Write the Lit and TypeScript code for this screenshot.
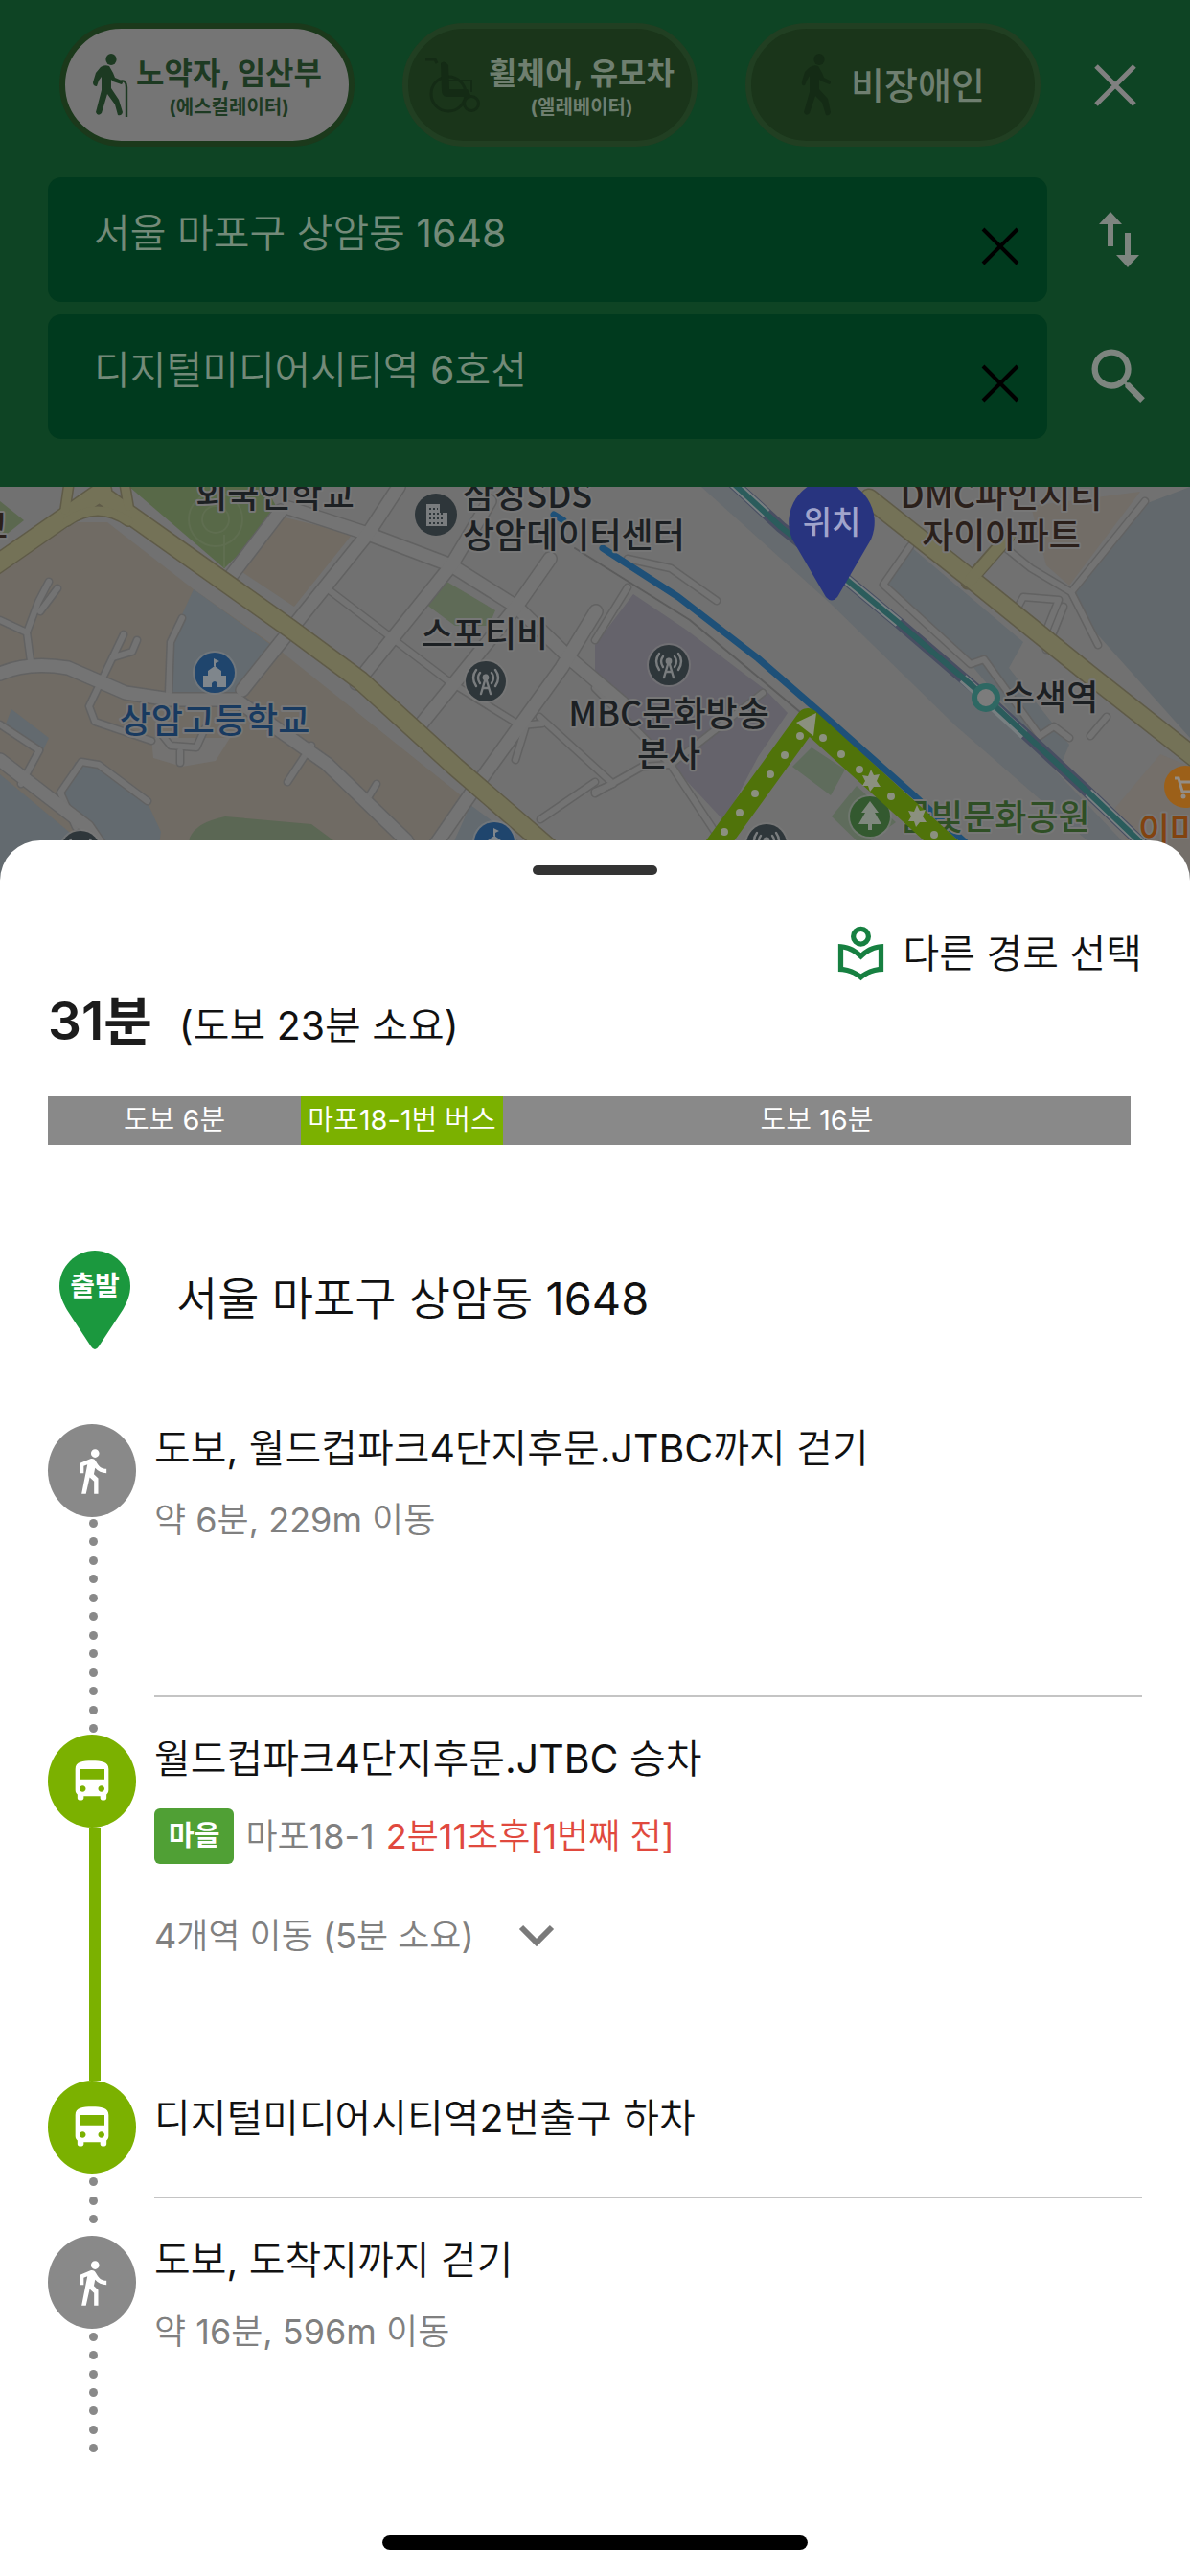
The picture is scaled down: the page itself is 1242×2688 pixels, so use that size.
import { LitElement, html, svg, css } from "lit";
import { customElement, state } from "lit/decorators.js";

type StepKind = "walk" | "bus";

interface Step {
  kind: StepKind;
  title: string;
  detail?: string;
  bus?: { badge: string; line: string; arrival: string; stops: string };
  link: "dots" | "line";
  dots: number;
  size: string;
  divider: boolean;
}

const STEPS: Step[] = [
  {
    kind: "walk",
    title: "도보, 월드컵파크4단지후문.JTBC까지 걷기",
    detail: "약 6분, 229m 이동",
    link: "dots",
    dots: 12,
    size: "tall",
    divider: true,
  },
  {
    kind: "bus",
    title: "월드컵파크4단지후문.JTBC 승차",
    bus: {
      badge: "마을",
      line: "마포18-1",
      arrival: "2분11초후[1번째 전]",
      stops: "4개역 이동 (5분 소요)",
    },
    link: "line",
    dots: 0,
    size: "ride",
    divider: false,
  },
  {
    kind: "bus",
    title: "디지털미디어시티역2번출구 하차",
    link: "dots",
    dots: 3,
    size: "short",
    divider: true,
  },
  {
    kind: "walk",
    title: "도보, 도착지까지 걷기",
    detail: "약 16분, 596m 이동",
    link: "dots",
    dots: 7,
    size: "last",
    divider: false,
  },
];

const SEGMENTS = [
  { label: "도보 6분", weight: 264, kind: "walk" },
  { label: "마포18-1번 버스", weight: 211, kind: "bus" },
  { label: "도보 16분", weight: 655, kind: "walk" },
];

const FONT = css`Inter, "Noto Sans CJK KR", "Noto Sans", sans-serif`;
/* Regular Latin figures next to light Hangul */
const MIXED = css`Inter, "Noto Sans CJK KR DemiLight", "Noto Sans CJK KR Light", "Noto Sans CJK KR", sans-serif`;

const walkIcon = html`<svg class="glyph" viewBox="0 0 24 24" aria-hidden="true">
  <path d="M13.5 5.5c1.1 0 2-.9 2-2s-.9-2-2-2-2 .9-2 2 .9 2 2 2zM9.8 8.9L7 23h2.1l1.8-8 2.1 2v6h2v-7.5l-2.1-2 .6-3C14.8 12 16.8 13 19 13v-2c-1.9 0-3.5-1-4.3-2.4l-1-1.6c-.4-.6-1-1-1.7-1-.3 0-.5.1-.8.1L6 8.3V13h2V9.6l1.8-.7z" />
</svg>`;

const busIcon = html`<svg class="glyph" viewBox="0 0 24 24" aria-hidden="true">
  <path d="M4 16c0 .88.39 1.67 1 2.22V20c0 .55.45 1 1 1h1c.55 0 1-.45 1-1v-1h8v1c0 .55.45 1 1 1h1c.55 0 1-.45 1-1v-1.78c.61-.55 1-1.34 1-2.22V6c0-3.5-3.58-4-8-4s-8 .5-8 4v10zm3.5 1c-.83 0-1.5-.67-1.5-1.5S6.67 14 7.5 14s1.5.67 1.5 1.5S8.33 17 7.5 17zm9 0c-.83 0-1.5-.67-1.5-1.5s.67-1.5 1.5-1.5 1.5.67 1.5 1.5-.67 1.5-1.5 1.5zm1.5-6H6V6h12v5z" />
</svg>`;

const elderIcon = html`<svg class="person" width="38" height="66" viewBox="0 0 38 66" aria-hidden="true">
  <ellipse cx="20" cy="6" rx="5.6" ry="6" />
  <path d="M9 14 Q13 11 18 13 L22 20 L24 25 L31 28 Q33 30 31 32 L22 29 L20 27 L20 36 L28 48 L32 61 Q31 65 27 64 L24 53 L16 42 L10 62 Q6 66 4 61 L10 38 L10 24 L7 28 L5 34 Q1 34 1 30 L4 20 Z" />
  <path d="M29 31 Q30 27 34 29 Q36 31 36 35 V66" fill="none" stroke="currentColor" stroke-width="2.4" />
</svg>`;

const wheelchairIcon = html`<svg class="person" width="58" height="58" viewBox="0 0 58 58" aria-hidden="true">
  <g fill="none" stroke="currentColor" stroke-width="3">
    <circle cx="24" cy="38" r="18" />
    <circle cx="48" cy="48" r="7.5" />
    <path d="M0 2 H10 L12 6" />
    <path d="M24 24 H48 V36" stroke-width="2" />
  </g>
  <path d="M16 6 Q20 2 24 8 L25 33 H44 L48 41 H22 Q17 40 17 34 Z" />
</svg>`;

const walkerIcon = html`<svg class="person" width="32" height="66" viewBox="0 0 32 66" aria-hidden="true">
  <ellipse cx="19" cy="6" rx="5.6" ry="6" />
  <path d="M8 15 Q13 11 18 13 L22 20 L24 25 L30 28 Q32 30 30 32 L22 29 L19 27 L19 37 L28 47 L31 61 Q30 65 26 64 L22 51 L15 44 L9 62 Q5 66 3 61 L9 40 L9 23 L6 28 L4 33 Q0 34 1 29 L4 19 Z" />
</svg>`;

const antenna = (x: number, y: number) => svg`
  <g transform="translate(${x} ${y})">
    <circle r="23" fill="#7a7a7a" opacity=".6" />
    <circle r="21" fill="#2e363a" />
    <g fill="none" stroke="#797c7e" stroke-width="2.4" stroke-linecap="round">
      <path d="M-6 -9 Q-10 -4 -6 2 M-10 -12 Q-16 -4 -10 5 M6 -9 Q10 -4 6 2 M10 -12 Q16 -4 10 5" />
      <path d="M-5 13 L0 -4 L5 13 M-3 7 H3" />
    </g>
    <circle cy="-4" r="3.4" fill="#797c7e" />
  </g>`;

const school = (x: number, y: number) => svg`
  <g transform="translate(${x} ${y})">
    <circle r="23" fill="#7a7f84" opacity=".6" />
    <circle r="21" fill="#1f456d" />
    <path d="M-12 15 V3 H-7 V-2 L0 -7 L7 -2 V3 H12 V15 H3 V11 Q0 7 -3 11 V15 Z M-1 -7 V-15 L5 -12 L1 -10 V-6 Z" fill="#7f868c" />
  </g>`;

const ROADS = [
  "M301 22 L384 49 L471 82 L539 125 L598 182 L650 226",
  "M416 0 L384 49 L301 152 L253 212",
  "M511 15 L471 82 L372 205",
  "M574 75 L539 125 L436 252",
  "M622 130 L586 189 L495 315 L450 380",
  "M293 25 L238 97",
  "M0 195 Q30 182 71 189 L131 215 L178 222 L246 222 L341 289 L424 369 L440 400",
  "M0 285 L91 355 L115 390",
];

const LANES = [
  "M345 109 L467 202 L543 249",
  "M51 99 L40 120 L28 152 L32 182",
  "M60 106 L42 130",
  "M0 139 L28 152",
  "M129 154 L93 229 L99 245 L158 265",
  "M118 178 L138 172 L143 160",
  "M190 137 L178 162 L176 215",
  "M0 248 L41 275 L22 310",
  "M79 355 L63 319 L85 287 L103 290 L154 328",
  "M170 260 L178 270 L205 272 L214 252",
  "M188 276 V288",
  "M325 270 L300 308",
  "M393 310 L382 328",
  "M564 347 L621 308",
  "M549 249 L538 285",
  "M543 249 L566 247",
  "M563 240 L640 310 L621 318",
  "M621 210 L700 290 L756 375",
  "M621 320 L670 292 L700 290",
  "M700 290 L796 215",
  "M621 160 L655 105",
  "M655 75 L700 85 L748 119",
  "M950 62 L922 102 L1013 185 L1027 180 L1085 260 L1100 250 L1116 262",
  "M1045 60 L1076 85 L1118 110 L1195 15",
  "M1118 110 L1146 165",
  "M1060 130 L1068 115 L1105 118 L1090 155",
  "M1110 125 L1092 170",
  "M1155 240 L1138 260",
];

@customElement("route-map")
export class RouteMap extends LitElement {
  static styles = css`
    :host {
      display: block;
      height: 412px;
      background: #717171;
    }
    .map {
      display: block;
      width: 100%;
      height: 100%;
    }
    .label {
      font: 500 36px "Noto Sans CJK KR", sans-serif;
      paint-order: stroke;
      stroke: #777;
      stroke-width: 4px;
      stroke-linejoin: round;
      fill: #1c2023;
    }
    .mid {
      text-anchor: middle;
    }
    .blue {
      fill: #183a60;
    }
    .brown {
      fill: #2b201b;
    }
    .park {
      fill: #2f4f25;
    }
    .shop {
      fill: #82430f;
    }
    .pin-text {
      font: 500 33px "Noto Sans CJK KR", sans-serif;
      fill: #a0a4cc;
      text-anchor: middle;
    }
  `;

  render() {
    return html`<svg class="map" viewBox="0 0 1242 412" preserveAspectRatio="xMidYMin slice" role="img" aria-label="지도">
      <rect width="1242" height="412" fill="#717171" />
      <path d="M0 85 L80 37 L112 37 L202 107 L285 165 L481 322 L430 412 H0 Z" fill="#706b64" />
      <path d="M0 15 L25 35 L0 55 Z" fill="#5b684f" />
      <path d="M202 107 L283 165 L253 212 L230 222 L174 219 L180 155 Z" fill="#646b70" />
      <path d="M135 0 L234 85 L293 29 L277 0 Z" fill="#586948" />
      <g fill="none" stroke="#5f6e50" stroke-width="2">
        <circle cx="225" cy="34" r="14" />
        <circle cx="225" cy="34" r="28" />
        <path d="M234 85 V50" />
      </g>
      <path d="M297 32 L368 49 L307 125 L253 89 Z" fill="#716b63" />
      <path d="M463 97 L517 129 L510 145 L475 145 L444 122 Z" fill="#5f6b57" />
      <path d="M12 232 L51 262 L45 275 L5 250 Z M79 287 L100 290 L154 330 L168 360 L160 412 H100 L63 319 Z M0 300 L90 375 L90 412 H0 Z M491 332 L545 372 V412 H455 Z" fill="#636a6f" />
      <path d="M158 262 L240 262 L225 286 L190 292 L160 283 Z" fill="#737271" />
      <path d="M198 366 Q205 350 235 344 L325 352 L352 372 V412 H190 Z" fill="#5b6754" />

      <path d="M661 112 L716 149 L799 212 L822 236 L791 282 L756 349 L700 289 L621 200 V165 Z" fill="#65636b" />
      <path d="M732 0 L772 0 L938 142 L1029 220 L1200 400 L1170 400 L997 249 L867 122 Z" fill="#666b6f" />
      <path d="M950 62 L1068 162 L1053 189 L1116 269 L1105 295 L1013 185 L922 102 Z" fill="#646a6e" />
      <path d="M1195 18 L1242 0 V262 L1132 139 L1118 109 Z" fill="#62686c" />
      <path d="M1076 20 L1190 5 L1116 103 L1092 82 Z" fill="#726d67" />
      <path d="M1211 279 L1242 292 V400 H1185 L1164 335 Z" fill="#746f6a" />
      <path d="M847 272 L882 295 L867 322 L827 292 Z M894 312 L935 350 L900 375 L868 344 Z" fill="#5f6c5c" />

      <g fill="none" stroke-linejoin="round" stroke-linecap="round">
        ${LANES.map((d) => svg`<path d=${d} stroke="#626262" stroke-width="9" />`)}
        ${ROADS.map((d) => svg`<path d=${d} stroke="#626262" stroke-width="16" />`)}
        ${LANES.map((d) => svg`<path d=${d} stroke="#737373" stroke-width="6" />`)}
        ${ROADS.map((d) => svg`<path d=${d} stroke="#747474" stroke-width="13" />`)}

        <g stroke="#5f5b48" stroke-width="21">
          <path d="M-5 82 L107 4 M107 9 L303 148 L376 202 L475 292 L600 400" />
          <path d="M907 12 L1017 99 L1136 195 L1250 285" />
        </g>
        <path d="M72 -4 L68 24 M130 -4 L134 20 M70 36 Q102 14 134 36" stroke="#5f5b48" stroke-width="12" />
        <path d="M1010 100 L1052 52" stroke="#5f5b48" stroke-width="15" />
        <g stroke="#747257" stroke-width="18">
          <path d="M-5 82 L107 4 M107 9 L303 148 L376 202 L475 292 L600 400" />
          <path d="M907 12 L1017 99 L1136 195 L1250 285" />
        </g>
        <path d="M72 -4 L68 24 M130 -4 L134 20 M70 36 Q102 14 134 36" stroke="#747257" stroke-width="9" />
        <path d="M1013 97 L1054 50" stroke="#747257" stroke-width="12" />

        <path d="M600 64 L720 139 L835 235" stroke="#5c5c5c" stroke-width="2" />
        <path d="M578 29 L588 35 M629 64 L708 115 L791 179 L867 245 L954 322 L1015 378" stroke="#1e5078" stroke-width="7" />
        <path d="M764 -5 L815 42 L874 89 L938 142 L1029 220 L1136 319 L1205 385" stroke="#484e62" stroke-width="12" />
        <path d="M764 -5 L800 28 M880 94 L938 142 M1005 200 L1069 259 M1136 319 L1205 385" stroke="#787f81" stroke-width="10" stroke-linecap="butt" />
        <path d="M764 -5 L815 42 L874 89 L938 142 L1029 220 L1136 319 L1205 385" stroke="#2b5c5c" stroke-width="6" />
      </g>
      <circle cx="1029" cy="220" r="12" fill="#7c7c7c" stroke="#2e6863" stroke-width="6" />

      <text class="label mid" x="287" y="22">외국인학교</text>
      <text class="label" x="483" y="22">삼성SDS</text>
      <text class="label" x="483" y="64">상암데이터센터</text>
      <text class="label mid" x="506" y="167">스포티비</text>
      <text class="label mid blue" x="224" y="257">상암고등학교</text>
      <text class="label brown" x="-25" y="54">교</text>
      <text class="label mid" x="698" y="250">MBC문화방송</text>
      <text class="label mid" x="698" y="292">본사</text>
      <text class="label mid brown" x="1045" y="22">DMC파인시티</text>
      <text class="label mid brown" x="1045" y="64">자이아파트</text>
      <text class="label" x="1047" y="233">수색역</text>
      <text class="label park" x="939" y="358">물빛문화공원</text>
      <text class="label shop" x="1188" y="371">이마트</text>

      <circle cx="455" cy="29" r="22" fill="#2e363a" />
      <path d="M445 18 H459 V27 H467 V41 H445 Z" fill="#797c7e" />
      <path d="M448 23 H457 M448 28 H464 M448 33 H464 M448 38 H464" stroke="#2e363a" stroke-width="2" stroke-dasharray="2 2" />
      ${antenna(507, 203)} ${antenna(698, 186)} ${antenna(800, 373)} ${antenna(84, 380)}
      ${school(224, 194)} ${school(516, 371)}

      <circle cx="908" cy="344" r="23" fill="#7a7f7a" opacity=".6" />
      <circle cx="908" cy="344" r="21" fill="#33592f" />
      <path d="M908 328 L917 340 H913 L920 352 H910 V358 H906 V352 H896 L903 340 H899 Z" fill="#7f887e" />
      <circle cx="1237" cy="313" r="22" fill="#9c6019" />
      <path d="M1226 304 H1230 L1234 318 H1246 M1231 308 H1246" fill="none" stroke="#938d86" stroke-width="3" />
      <circle cx="1235" cy="323" r="2.5" fill="#938d86" />

      <path d="M738 388 L843 243 L1003 388" fill="none" stroke="#50730a" stroke-width="24" stroke-linejoin="round" />
      <g fill="#8b907f">
        ${[
          [835, 260], [819, 280], [804, 300], [788, 320], [772, 340], [756, 360],
          [859, 262], [878, 279], [897, 295], [930, 323], [975, 363],
        ].map(([x, y]) => svg`<circle cx=${x} cy=${y} r="4" />`)}
        <path d="M831 246 L852 236 L849 260 Z" />
        ${[
          [909, 307],
          [957, 344],
        ].map(
          ([x, y]) => svg`<path transform="translate(${x} ${y})"
            d="M0 -12 L3 -6 L9 -7 L6 0 L10 6 L3 6 L-1 11 L-3 5 L-9 5 L-6 0 L-9 -6 L-3 -5 Z" />`,
        )}
      </g>

      <path d="M868 -8 A45 45 0 0 0 827 55 L862 115 Q868 122 874 115 L909 55 A45 45 0 0 0 868 -8 Z" fill="#28347f" />
      <text class="pin-text" x="868" y="49">위치</text>
    </svg>`;
  }
}

@customElement("route-step")
export class RouteStep extends LitElement {
  static properties = { step: { attribute: false }, open: { state: true } };
  declare step: Step;
  declare open: boolean;

  constructor() {
    super();
    this.open = false;
  }

  static styles = css`
    :host {
      display: block;
      font-family: ${FONT};
    }
    .step {
      display: grid;
      grid-template-columns: 92px 1fr;
      column-gap: 19px;
    }
    .tall {
      min-height: 324px;
    }
    .ride {
      min-height: 361px;
    }
    .short {
      min-height: 162px;
    }
    .last {
      min-height: 228px;
    }
    .rail {
      display: flex;
      flex-direction: column;
    }
    .marker {
      display: grid;
      place-items: center;
      height: 97px;
      border-radius: 50%;
      background: #898989;
    }
    .marker.bus {
      background: #7bb100;
    }
    .glyph {
      width: 52px;
      height: 52px;
      fill: #fff;
    }
    .link {
      flex: 1;
      margin-left: 43px;
    }
    .line {
      width: 12px;
      background: #7bb100;
    }
    .dots {
      display: flex;
      flex-direction: column;
      justify-content: space-between;
      padding: 2px 0;
    }
    .short .dots {
      padding: 4px 0 13px;
    }
    .last .dots {
      padding: 4px 0 2px;
    }
    .dot {
      width: 9px;
      height: 9px;
      border-radius: 50%;
      background: #898989;
    }
    .body {
      display: flex;
      flex-direction: column;
    }
    .body.divider {
      border-bottom: 2px solid #c4c4c4;
      margin-bottom: 39px;
    }
    .title {
      margin: 0;
      font-size: 41px;
      font-weight: 400;
      font-family: ${MIXED};
      line-height: 50px;
      color: #111;
    }
    .short .title {
      padding-top: 14px;
    }
    .detail {
      margin: 28px 0 0;
      font: 400 36px/44px ${MIXED};
      color: #808080;
    }
    .arrival {
      display: flex;
      align-items: center;
      gap: 12px;
      margin-top: 27px;
      height: 58px;
      font: 400 36px/44px ${MIXED};
      color: #808080;
    }
    .badge {
      padding: 7px 15px;
      border-radius: 6px;
      background: #50a035;
      color: #fff;
      font-size: 29px;
      font-weight: 700;
      font-family: ${FONT};
    }
    .soon {
      color: #e0493e;
    }
    .stops {
      display: flex;
      align-items: center;
      align-self: flex-start;
      gap: 46px;
      margin-top: 53px;
      padding: 0;
      border: 0;
      background: none;
      font: 400 36px/44px ${MIXED};
      color: #808080;
    }
  `;

  private renderBus(bus: NonNullable<Step["bus"]>) {
    return html`
      <div class="arrival">
        <span class="badge">${bus.badge}</span>
        <span>${bus.line}</span>
        <span class="soon">${bus.arrival}</span>
      </div>
      <button class="stops" aria-expanded=${this.open} @click=${() => (this.open = !this.open)}>
        ${bus.stops}
        <svg width="38" height="26" viewBox="0 0 38 26" aria-hidden="true">
          <path d="M3 4 L19 20 L35 4" fill="none" stroke="#7a7a7a" stroke-width="6" />
        </svg>
      </button>
    `;
  }

  render() {
    const s = this.step;
    return html`<div class="step ${s.size}">
      <div class="rail">
        <div class="marker ${s.kind}">${s.kind === "bus" ? busIcon : walkIcon}</div>
        <div class="link ${s.link}">
          ${Array.from({ length: s.dots }, () => html`<span class="dot"></span>`)}
        </div>
      </div>
      <div class="body ${s.divider ? "divider" : ""}">
        <h2 class="title">${s.title}</h2>
        ${s.detail ? html`<p class="detail">${s.detail}</p>` : null}
        ${s.bus ? this.renderBus(s.bus) : null}
      </div>
    </div>`;
  }
}

@customElement("app-root")
export class AppRoot extends LitElement {
  @state() private from = "서울 마포구 상암동 1648";
  @state() private to = "디지털미디어시티역 6호선";
  @state() private mode = 0;

  static styles = css`
    :host {
      display: flex;
      flex-direction: column;
      min-height: 100vh;
      background: #fff;
      font-family: ${FONT};
      color: #111;
    }
    button {
      padding: 0;
      border: 0;
      background: none;
      font-family: inherit;
    }
    .header {
      padding: 24px 0 50px;
      background: #0e4424;
    }
    .modes {
      display: flex;
      padding-left: 62px;
    }
    .choices {
      flex: 1;
      display: flex;
      gap: 50px;
    }
    .mode {
      flex: 1;
      display: flex;
      align-items: center;
      justify-content: center;
      gap: 8px;
      height: 129px;
      box-sizing: border-box;
      border: 6px solid #213f22;
      border-radius: 65px;
      background: #1a351a;
      color: #6f7f70;
      font-weight: 700;
    }
    .mode.on {
      border-color: #1b391b;
      background: #757575;
      color: #1d3a22;
    }
    .mode .person {
      flex: none;
      fill: currentColor;
      color: #142b15;
    }
    .mode.on .person {
      color: #1d3a22;
    }
    .names {
      display: flex;
      flex-direction: column;
      align-items: center;
      gap: 2px;
      padding-top: 2px;
    }
    .name {
      font-size: 32px;
      line-height: 42px;
      white-space: nowrap;
    }
    .note {
      font-size: 20px;
      line-height: 24px;
    }
    .mode.plain {
      gap: 20px;
    }
    .plain .name {
      font-size: 38px;
      font-weight: 500;
    }
    .close {
      display: grid;
      place-items: center;
      width: 156px;
    }
    .search {
      display: grid;
      grid-template-columns: 1fr 149px;
      grid-auto-rows: 130px;
      row-gap: 13px;
      padding: 32px 0 0 50px;
    }
    .field {
      display: flex;
      align-items: center;
      border-radius: 14px;
      background: #003a1e;
    }
    .input {
      flex: 1;
      min-width: 0;
      height: 110px;
      margin: 0 0 20px;
      padding: 0 0 0 48px;
      box-sizing: border-box;
      border: 0;
      outline: 0;
      background: none;
      font: 400 41px/50px ${MIXED};
      color: #738a79;
    }
    .clear {
      display: grid;
      place-items: center;
      width: 60px;
      height: 60px;
      margin: 14px 19px 0 0;
    }
    .action {
      display: grid;
      place-items: center;
    }
    .sheet {
      position: relative;
      flex: 1;
      display: flex;
      flex-direction: column;
      margin-top: -43px;
      padding: 26px 50px 27px;
      border-radius: 42px 42px 0 0;
      background: #fff;
    }
    .handle {
      align-self: center;
      width: 130px;
      height: 10px;
      border-radius: 5px;
      background: #333;
    }
    .other {
      display: flex;
      align-items: center;
      align-self: flex-end;
      gap: 13px;
      margin-top: 50px;
      font: 400 41px/64px ${MIXED};
      color: #111;
    }
    .other svg {
      fill: #178041;
    }
    .summary {
      display: flex;
      align-items: baseline;
      gap: 28px;
      margin-top: 6px;
    }
    .total {
      margin: 0;
      font-size: 55px;
      font-weight: 600;
      line-height: 64px;
      color: #1c1c1c;
    }
    .walk {
      font: 400 41px/64px ${MIXED};
    }
    .bar {
      display: flex;
      margin: 42px 12px 0 0;
    }
    .segment {
      min-width: 0;
      height: 51px;
      background: #898989;
      color: #fff;
      font: 400 29px/50px ${MIXED};
      text-align: center;
      white-space: nowrap;
    }
    .segment.bus {
      background: #7bb100;
    }
    .origin {
      display: flex;
      align-items: center;
      gap: 48px;
      margin-top: 110px;
      padding-left: 12px;
    }
    .pin {
      display: block;
    }
    .pin-text {
      font: 700 28px "Noto Sans CJK KR", sans-serif;
      fill: #fff;
      text-anchor: middle;
    }
    .address {
      margin: 0;
      padding-bottom: 4px;
      font: 400 47px/60px ${MIXED};
    }
    .steps {
      display: flex;
      flex-direction: column;
      margin: 78px 0 0;
      padding: 0;
      list-style: none;
    }
    .home {
      align-self: center;
      width: 444px;
      height: 16px;
      margin-top: auto;
      border-radius: 8px;
      background: #000;
    }
  `;

  private swap() {
    [this.from, this.to] = [this.to, this.from];
  }

  private renderField(label: string, value: string, set: (v: string) => void) {
    return html`<div class="field">
      <input
        class="input"
        type="text"
        aria-label=${label}
        .value=${value}
        @input=${(e: Event) => set((e.target as HTMLInputElement).value)}
      />
      <button class="clear" aria-label="${label} 지우기" @click=${() => set("")}>
        <svg width="40" height="40" viewBox="0 0 40 40" aria-hidden="true">
          <path d="M2 2 L38 38 M38 2 L2 38" stroke="#000" stroke-width="4" />
        </svg>
      </button>
    </div>`;
  }

  render() {
    const on = (i: number) => (this.mode === i ? "on" : "");
    const pick = (i: number) => () => (this.mode = i);
    return html`
      <header class="header">
        <div class="modes">
          <div class="choices">
            <button class="mode ${on(0)}" @click=${pick(0)}>
              ${elderIcon}
              <span class="names">
                <span class="name">노약자, 임산부</span>
                <span class="note">(에스컬레이터)</span>
              </span>
            </button>
            <button class="mode ${on(1)}" @click=${pick(1)}>
              ${wheelchairIcon}
              <span class="names">
                <span class="name">휠체어, 유모차</span>
                <span class="note">(엘레베이터)</span>
              </span>
            </button>
            <button class="mode plain ${on(2)}" @click=${pick(2)}>
              ${walkerIcon}
              <span class="name">비장애인</span>
            </button>
          </div>
          <button class="close" aria-label="닫기">
            <svg width="46" height="46" viewBox="0 0 46 46" aria-hidden="true">
              <path d="M3 3 L43 43 M43 3 L3 43" stroke="#808080" stroke-width="5" />
            </svg>
          </button>
        </div>
        <div class="search">
          ${this.renderField("출발지", this.from, (v) => (this.from = v))}
          <button class="action" aria-label="출발지와 도착지 바꾸기" @click=${this.swap}>
            <svg width="44" height="60" viewBox="0 0 44 60" fill="#7d857f" aria-hidden="true">
              <path d="M13 1 L25 14 H16 V37 H10 V14 H1 Z" />
              <path d="M31 59 L19 46 H28 V23 H34 V46 H43 Z" />
            </svg>
          </button>
          ${this.renderField("도착지", this.to, (v) => (this.to = v))}
          <button class="action" aria-label="검색">
            <svg width="76" height="76" viewBox="0 0 24 24" fill="#7d857f" aria-hidden="true">
              <path d="M15.5 14h-.79l-.28-.27A6.471 6.471 0 0 0 16 9.5 6.5 6.5 0 1 0 9.5 16c1.61 0 3.09-.59 4.23-1.57l.27.28v.79l5 4.99L20.49 19l-4.99-5zm-6 0C7.01 14 5 11.99 5 9.5S7.01 5 9.5 5 14 7.01 14 9.5 11.99 14 9.5 14z" />
            </svg>
          </button>
        </div>
      </header>

      <route-map></route-map>

      <main class="sheet">
        <div class="handle"></div>
        <button class="other">
          <svg width="63" height="63" viewBox="0 0 24 24" aria-hidden="true">
            <path fill-rule="evenodd" d="M12 1a4 4 0 1 0 0 8 4 4 0 0 0 0-8zm0 2a2 2 0 1 1 0 4 2 2 0 0 1 0-4z" />
            <path d="M12 11.55C9.64 9.35 6.48 8 3 8v11c3.48 0 6.64 1.35 9 3.55 2.36-2.19 5.52-3.55 9-3.55V8c-3.48 0-6.64 1.35-9 3.55zm7 5.58c-2.53.34-4.93 1.3-7 2.82-2.06-1.52-4.47-2.49-7-2.83v-6.95c2.1.38 4.05 1.35 5.64 2.83L12 14.28l1.36-1.27c1.59-1.48 3.54-2.45 5.64-2.83v6.95z" />
          </svg>
          다른 경로 선택
        </button>
        <div class="summary">
          <h1 class="total">31분</h1>
          <span class="walk">(도보 23분 소요)</span>
        </div>
        <div class="bar">
          ${SEGMENTS.map(
            (s) => html`<div class="segment ${s.kind}" style="flex: ${s.weight} 1 0">${s.label}</div>`,
          )}
        </div>
        <div class="origin">
          <svg class="pin" width="74" height="103" viewBox="0 0 74 103" role="img" aria-label="출발">
            <path d="M37 0 C57 0 74 17 74 37 C74 46 71 53 66 62 L41 100 Q37 106 33 100 L8 62 C3 53 0 46 0 37 C0 17 17 0 37 0 Z" fill="#1b983e" />
            <text class="pin-text" x="37" y="47">출발</text>
          </svg>
          <p class="address">서울 마포구 상암동 1648</p>
        </div>
        <ol class="steps">
          ${STEPS.map((s) => html`<li><route-step .step=${s}></route-step></li>`)}
        </ol>
        <div class="home"></div>
      </main>
    `;
  }
}
